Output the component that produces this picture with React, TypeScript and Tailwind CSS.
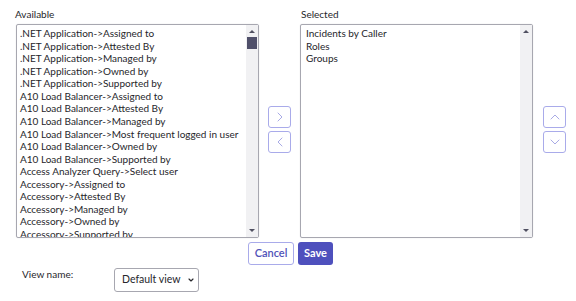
import { ChevronLeft, ChevronRight, ChevronUp, ChevronDown } from 'lucide-react';

const available = [
  '.NET Application->Assigned to',
  '.NET Application->Attested By',
  '.NET Application->Managed by',
  '.NET Application->Owned by',
  '.NET Application->Supported by',
  'A10 Load Balancer->Assigned to',
  'A10 Load Balancer->Attested By',
  'A10 Load Balancer->Managed by',
  'A10 Load Balancer->Most frequent logged in user',
  'A10 Load Balancer->Owned by',
  'A10 Load Balancer->Supported by',
  'Access Analyzer Query->Select user',
  'Accessory->Assigned to',
  'Accessory->Attested By',
  'Accessory->Managed by',
  'Accessory->Owned by',
  'Accessory->Supported by',
];

const selected = ['Incidents by Caller', 'Roles', 'Groups'];

function Scrollbar({ thumb }: { thumb: boolean }) {
  return (
    <div className="w-[12px] bg-[#f1f1f3] flex flex-col justify-between pt-[5px] pb-[5px]">
      <div className="flex flex-col">
        <div className="self-center w-0 h-0 border-l-[3px] border-r-[3px] border-b-[3px] border-l-transparent border-r-transparent border-b-[#505061]" />
        {thumb && <div className="mt-[4px] ml-[1px] w-[10px] h-[12px] bg-[#50506a]" />}
      </div>
      <div className="self-center w-0 h-0 border-l-[3px] border-r-[3px] border-t-[3px] border-l-transparent border-r-transparent border-t-[#505061]" />
    </div>
  );
}

function IconButton({ children }: { children: React.ReactNode }) {
  return (
    <button className="w-[23px] h-[22px] flex items-center justify-center rounded-[3px] border border-[#a9abea] bg-white text-[#7c7fd8]">
      {children}
    </button>
  );
}

export default function App() {
  return (
    <div className="w-[576px] h-[301px] bg-white text-[#26262b] font-['Lato',sans-serif] overflow-hidden">
      <div className="flex pt-[8px] pl-[15px]">
        <div className="flex flex-col">
          <span className="text-[10px] leading-[13px] mb-[3px]">Available</span>
          <div className="w-[243px] h-[214px] flex border border-[#a7a7b0] rounded-[2px] shadow-[0_0_1px_rgba(0,0,0,0.2)] ml-[1px]">
            <ul className="flex-1 overflow-hidden pt-[2px] pl-[3px] text-[10px] leading-[12.57px] whitespace-nowrap">
              {available.map((item) => (
                <li key={item}>{item}</li>
              ))}
            </ul>
            <Scrollbar thumb />
          </div>
        </div>

        <div className="flex flex-col gap-[3px] mt-[98px] ml-[9px]">
          <IconButton><ChevronRight size={16} strokeWidth={1} /></IconButton>
          <IconButton><ChevronLeft size={16} strokeWidth={1} /></IconButton>
        </div>

        <div className="flex flex-col ml-[9px]">
          <span className="text-[10px] leading-[13px] mb-[3px] ml-[1px]">Selected</span>
          <div className="w-[233px] h-[214px] flex border border-[#a7a7b0] rounded-[2px] shadow-[0_0_1px_rgba(0,0,0,0.2)]">
            <ul className="flex-1 overflow-hidden pt-[2px] pl-[5px] text-[10px] leading-[12.57px] whitespace-nowrap">
              {selected.map((item) => (
                <li key={item}>{item}</li>
              ))}
            </ul>
            <Scrollbar thumb={false} />
          </div>
        </div>

        <div className="flex flex-col gap-[3px] mt-[98px] ml-[10px]">
          <IconButton><ChevronUp size={16} strokeWidth={1} /></IconButton>
          <IconButton><ChevronDown size={16} strokeWidth={1} /></IconButton>
        </div>
      </div>

      <div className="flex justify-start gap-[4px] mt-[4px] ml-[248px]">
        <button className="w-[46px] h-[23px] rounded-[3px] border border-[#a9abea] bg-white text-[#4f52b8] text-[11px] font-semibold">
          Cancel
        </button>
        <button className="w-[35px] h-[23px] rounded-[3px] bg-[#4e50bd] text-white text-[11px] font-bold">
          Save
        </button>
      </div>

      <div className="flex items-center mt-[3px] ml-[22px]">
        <span className="w-[92px] text-[10px] -mt-[12px]">View name:</span>
        <div className="w-[85px] h-[24px] flex items-center justify-between pl-[7px] pr-[3px] border border-[#a7a7b0] rounded-[3px] text-[10.5px] whitespace-nowrap">
          <span>Default view</span>
          <ChevronDown size={8} strokeWidth={3.5} />
        </div>
      </div>
    </div>
  );
}
